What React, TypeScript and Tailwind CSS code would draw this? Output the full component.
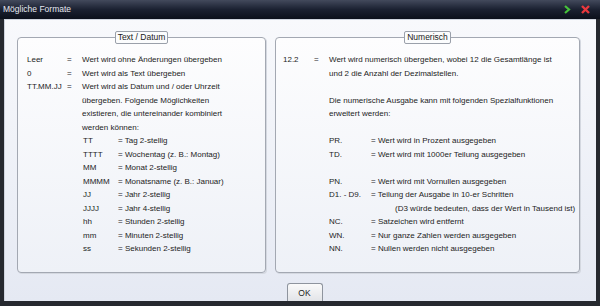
const leftRows: [string, string][] = [
  ["TT", "Tag 2-stellig"],
  ["TTTT", "Wochentag (z. B.: Montag)"],
  ["MM", "Monat 2-stellig"],
  ["MMMM", "Monatsname (z. B.: Januar)"],
  ["JJ", "Jahr 2-stellig"],
  ["JJJJ", "Jahr 4-stellig"],
  ["hh", "Stunden 2-stellig"],
  ["mm", "Minuten 2-stellig"],
  ["ss", "Sekunden 2-stellig"],
]

const numRows: [string, string][] = [
  ["PN.", "Wert wird mit Vornullen ausgegeben"],
  ["D1. - D9.", "Teilung der Ausgabe in 10-er Schritten"],
]

function GroupBox({ title, className, children }: { title: string; className: string; children: React.ReactNode }) {
  return (
    <div className={`relative shrink-0 rounded-[4px] border border-[#a3a8b2] bg-gradient-to-b from-[#fdfdfe] to-[#eef1f7] pb-[16.5px] pt-[15px] shadow-[1px_1px_0_#d4d8e0] ${className}`}>
      <div className="absolute -top-[7px] left-0 right-0 flex justify-center">
        <span className="rounded-[2px] border border-[#9aa0aa] bg-[#fbfcfd] px-[2px] text-[8.5px] leading-[11px] text-[#1a1a1a]">
          {title}
        </span>
      </div>
      {children}
    </div>
  )
}

export default function App() {
  return (
    <div className="w-[600px] bg-[#26292f] pb-[5px] font-['Liberation_Sans',Arial,sans-serif] text-[8px] leading-[13.5px] text-[#1c1c1c]">
      <div className="flex items-center justify-between bg-gradient-to-b from-[#434a5c] via-[#1b2131] to-[#0c101b] py-[2.75px] pl-[3px] pr-[10px]">
        <span className="text-[8.5px] text-[#e6e9f0]">Mögliche Formate</span>
        <div className="flex items-center gap-[10px]">
          <svg width="7" height="9" viewBox="0 0 7 9">
            <path d="M1 1 L5 4.5 L1 8" fill="none" stroke="#46c23a" strokeWidth="2.2" />
          </svg>
          <svg width="9" height="9" viewBox="0 0 9 9">
            <path d="M1 1 L8 8 M8 1 L1 8" stroke="#e8383d" strokeWidth="2.4" />
          </svg>
        </div>
      </div>
      <div className="mx-[4px] overflow-hidden border-l border-t border-[#cfd4de] bg-gradient-to-b from-[#f8f9fc] to-[#e5e9f3]">
        <div className="flex gap-[9px] pl-[12px] pr-[15px] pt-[17px]">
          <GroupBox title="Text / Datum" className="w-[249px] pl-[9px]">
            <div className="grid grid-cols-[40px_15px_1fr]">
              <span>Leer</span>
              <span>=</span>
              <span>Wert wird ohne Änderungen übergeben</span>
              <span>0</span>
              <span>=</span>
              <span>Wert wird als Text übergeben</span>
              <span>TT.MM.JJ</span>
              <span>=</span>
              <span className="whitespace-nowrap">
                Wert wird als Datum und / oder Uhrzeit
                <br />
                übergeben. Folgende Möglichkeiten
                <br />
                existieren, die untereinander kombiniert
                <br />
                werden können:
              </span>
            </div>
            <div className="grid grid-cols-[35px_1fr] pl-[56px]">
              {leftRows.map(([k, v]) => (
                <div key={k} className="contents">
                  <span>{k}</span>
                  <span>= {v}</span>
                </div>
              ))}
            </div>
          </GroupBox>
          <GroupBox title="Numerisch" className="w-[305px] pl-[7px]">
            <div className="grid grid-cols-[31px_15px_1fr]">
              <span>12.2</span>
              <span>=</span>
              <div className="whitespace-nowrap">
                <p>
                  Wert wird numerisch übergeben, wobei 12 die Gesamtlänge ist
                  <br />
                  und 2 die Anzahl der Dezimalstellen.
                </p>
                <p className="mt-[13.5px]">
                  Die numerische Ausgabe kann mit folgenden Spezialfunktionen
                  <br />
                  erweitert werden:
                </p>
                <div className="mt-[13.5px] grid grid-cols-[42px_1fr]">
                  <span>PR.</span>
                  <span>= Wert wird in Prozent ausgegeben</span>
                  <span>TD.</span>
                  <span>= Wert wird mit 1000er Teilung ausgegeben</span>
                  <span className="col-span-2 pt-[13.5px]" />
                  {numRows.map(([k, v]) => (
                    <div key={k} className="contents">
                      <span>{k}</span>
                      <span>= {v}</span>
                    </div>
                  ))}
                  <span />
                  <span className="pl-[24px]">(D3 würde bedeuten, dass der Wert in Tausend ist)</span>
                  <span>NC.</span>
                  <span>= Satzeichen wird entfernt</span>
                  <span>WN.</span>
                  <span>= Nur ganze Zahlen werden ausgegeben</span>
                  <span>NN.</span>
                  <span>= Nullen werden nicht ausgegeben</span>
                </div>
              </div>
            </div>
          </GroupBox>
        </div>
        <div className="flex justify-center pl-[8px] pt-[10px]">
          <button className="w-[36px] rounded-t-[3px] border border-b-0 border-[#8e949e] bg-gradient-to-b from-[#fafafa] to-[#e2e4e8] pb-[1px] pt-[2px] text-[8.5px] leading-[14px] text-[#1c1c1c]">
            OK
          </button>
        </div>
      </div>
    </div>
  )
}
